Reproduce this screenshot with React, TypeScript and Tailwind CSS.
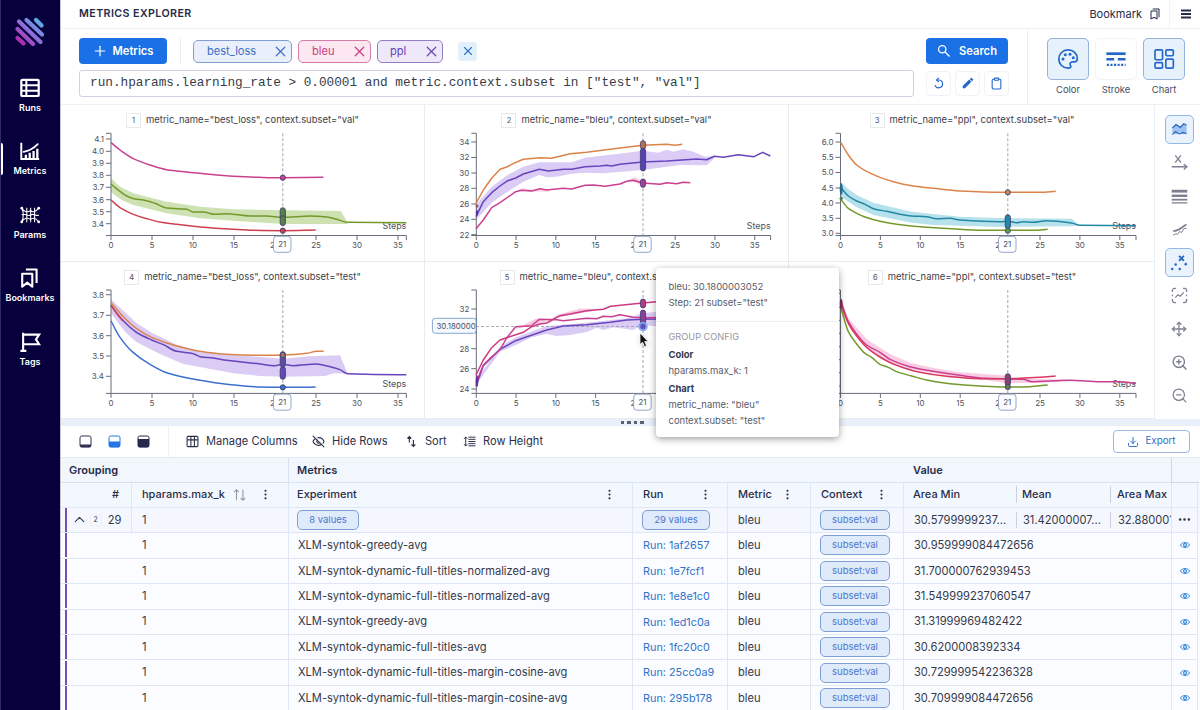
import React from "react";
import {
  ChevronUp, Clipboard, EyeOff, Move, MoreHorizontal, MoreVertical,
  Plus, Search, X, ZoomIn, ZoomOut, Download,
} from "lucide-react";
import { MdEdit, MdOutlineBookmarks } from "react-icons/md";

type Pt = [number, number];
type Line = { color: string; pts: Pt[] };
type Marker = { y0: number; y1: number; fill: string };
type Chart = {
  id: number;
  title: string;
  view: string;
  origin: Pt;
  x0: number;
  step: number;
  end: number;
  top: number;
  bottom: number;
  ticks: [string, number][];
  steps: number[];
  axisName?: string;
  smooth?: boolean;
  guide: number;
  bands: Line[];
  lines: Line[];
  markers: Marker[];
};

const ORANGE = "#dc834a";
const PURPLE = "#6844bd";
const MAGENTA = "#c9408f";
const GREEN = "#73992b";
const RED = "#cf3f4c";
const TEAL = "#2288a6";
const BLUE = "#3d70cc";
const STEPS = [0, 5, 10, 15, 20, 25, 30, 35];

const charts: Chart[] = [
  {
    id: 1, title: 'metric_name="best_loss", context.subset="val"', view: "61 129 363 133", origin: [0, 0],
    x0: 111, step: 8.2, end: 406.3, top: 133.3, bottom: 235.5, guide: 282.8, steps: STEPS, axisName: "Steps", smooth: true,
    ticks: [["4.1", 139], ["4.0", 151.3], ["3.9", 163.3], ["3.8", 175.3], ["3.7", 187.3], ["3.6", 199.7], ["3.5", 211.7], ["3.4", 223.7]],
    bands: [{ color: "#c9deaa", pts: [[333, 535], [360, 560], [400, 580], [500, 605], [600, 620], [700, 628], [848, 631], [1022, 633], [1043, 668], [1043, 672], [848, 672], [700, 662], [600, 655], [500, 640], [400, 615], [365, 600], [333, 577]] }],
    lines: [
      { color: MAGENTA, pts: [[333, 428], [360, 450], [400, 476], [450, 495], [500, 509], [560, 516], [600, 520], [700, 529], [780, 532], [848, 533], [970, 532]] },
      { color: GREEN, pts: [[333, 552], [357, 572], [380, 588], [405, 597], [430, 600], [465, 610], [500, 624], [560, 628], [580, 636], [610, 636], [645, 643], [680, 641], [750, 648], [800, 648], [848, 652], [930, 648], [980, 651], [1010, 658], [1043, 667], [1219, 668]] },
      { color: RED, pts: [[333, 600], [365, 626], [400, 643], [440, 656], [480, 666], [530, 673], [600, 681], [700, 688], [760, 691], [848, 692], [947, 690]] },
    ],
    markers: [{ y0: 533, y1: 533, fill: MAGENTA }, { y0: 631, y1: 652, fill: "#598047" }, { y0: 655, y1: 669, fill: "#598047" }, { y0: 692, y1: 692, fill: RED }],
  },
  {
    id: 2, title: 'metric_name="bleu", context.subset="val"', view: "425 129 363 133", origin: [400, 0],
    x0: 476.3, step: 7.955, end: 770.6, top: 133.3, bottom: 235.5, guide: 643, steps: STEPS, axisName: "Steps",
    ticks: [["34", 142], ["32", 157.5], ["30", 173], ["28", 188.3], ["26", 204], ["24", 219.3], ["22", 234.7]],
    bands: [{ color: "#d6c6f3", pts: [[228, 615], [275, 560], [323, 525], [370, 500], [418, 487], [515, 487], [555, 473], [650, 462], [728, 452], [775, 458], [800, 449], [820, 455], [850, 448], [880, 455], [915, 470], [943, 469], [943, 475], [920, 496], [840, 495], [728, 510], [610, 520], [550, 518], [510, 522], [470, 530], [440, 532], [418, 525], [370, 545], [300, 590], [275, 608], [228, 660]] },
      { color: "#f9c9df", pts: [[680, 543], [705, 531], [728, 545], [728, 556], [700, 546]] }, { color: "#f9d4e5", pts: [[345, 572], [370, 564], [395, 569], [440, 569], [450, 576], [370, 574]] }],
    lines: [
      { color: ORANGE, pts: [[228, 610], [250, 570], [275, 535], [300, 508], [320, 501], [345, 488], [370, 478], [420, 473], [455, 475], [510, 461], [560, 457], [630, 448], [728, 436], [800, 433], [825, 436], [847, 433]] },
      { color: PURPLE, pts: [[228, 650], [250, 605], [275, 578], [300, 558], [323, 542], [347, 534], [370, 522], [418, 508], [445, 513], [490, 508], [515, 508], [555, 500], [600, 498], [620, 496], [635, 498], [660, 493], [728, 486], [800, 483], [890, 477], [920, 479], [943, 469], [970, 472], [1015, 464], [1062, 470], [1088, 457], [1111, 468]] },
      { color: MAGENTA, pts: [[228, 686], [250, 660], [275, 623], [300, 608], [347, 575], [365, 571], [395, 573], [420, 566], [440, 570], [490, 565], [515, 567], [555, 556], [580, 555], [615, 559], [660, 552], [680, 544], [700, 541], [728, 549], [780, 553], [800, 548], [830, 551], [850, 547], [871, 548]] },
    ],
    markers: [{ y0: 430, y1: 440, fill: "#b76c55" }, { y0: 453, y1: 505, fill: "#5940b4" }, { y0: 545, y1: 554, fill: "#a73d92" }],
  },
  {
    id: 3, title: 'metric_name="ppl", context.subset="val"', view: "789 129 366 133", origin: [800, 0],
    x0: 840.5, step: 7.98, end: 1136, top: 133.3, bottom: 235.5, guide: 1007.8, steps: STEPS, axisName: "Steps", smooth: true,
    ticks: [["6.0", 142], ["5.5", 157.3], ["5.0", 172.5], ["4.5", 188], ["4.0", 203], ["3.5", 218.3], ["3.0", 233.3]],
    bands: [{ color: "#afdfea", pts: [[122, 546], [145, 567], [170, 585], [220, 608], [335, 635], [480, 650], [600, 654], [815, 656], [838, 676], [815, 679], [600, 681], [400, 675], [335, 668], [220, 645], [170, 622], [122, 590]] }],
    lines: [
      { color: ORANGE, pts: [[122, 427], [145, 465], [170, 495], [200, 514], [240, 532], [280, 545], [335, 557], [400, 565], [480, 573], [600, 577], [720, 577], [767, 574]] },
      { color: TEAL, pts: [[122, 562], [145, 588], [170, 603], [195, 613], [220, 626], [260, 634], [335, 648], [380, 650], [410, 656], [450, 655], [480, 660], [600, 665], [625, 664], [650, 668], [670, 665], [700, 667], [740, 662], [815, 669], [840, 676], [1008, 677]] },
      { color: GREEN, pts: [[122, 598], [145, 625], [170, 640], [195, 651], [240, 664], [290, 673], [380, 682], [480, 688], [560, 691], [700, 691], [743, 688]] },
    ],
    markers: [{ y0: 577, y1: 577, fill: "#c58462" }, { y0: 652, y1: 678, fill: TEAL }, { y0: 692, y1: 692, fill: "#5f9650" }],
  },
  {
    id: 4, title: 'metric_name="best_loss", context.subset="test"', view: "61 286 363 133", origin: [0, 230],
    x0: 111, step: 8.2, end: 406.3, top: 290, bottom: 393.4, guide: 282.8, steps: STEPS, axisName: "Steps", smooth: true,
    ticks: [["3.8", 294.7], ["3.7", 315.3], ["3.6", 335.7], ["3.5", 356], ["3.4", 376.3]],
    bands: [{ color: "#d6c6f3", pts: [[333, 208], [370, 242], [410, 280], [455, 308], [530, 344], [600, 364], [700, 375], [848, 386], [930, 379], [1020, 376], [1043, 431], [1000, 430], [975, 438], [848, 440], [780, 438], [700, 430], [620, 415], [550, 402], [480, 372], [408, 335], [375, 305], [333, 250]] }],
    lines: [
      { color: PURPLE, pts: [[333, 226], [360, 262], [408, 306], [455, 330], [490, 344], [530, 364], [580, 371], [600, 380], [640, 384], [680, 391], [780, 402], [825, 407], [848, 403], [880, 407], [950, 402], [985, 409], [1020, 419], [1043, 431], [1200, 434], [1219, 434]] },
      { color: RED, pts: [[333, 226], [350, 250], [368, 272]] },
      { color: ORANGE, pts: [[333, 218], [370, 260], [410, 296], [455, 322], [530, 348], [600, 364], [680, 373], [780, 376], [848, 375], [920, 370], [950, 364], [971, 364]] },
      { color: BLUE, pts: [[333, 273], [360, 322], [400, 368], [450, 403], [505, 430], [600, 451], [680, 463], [780, 471], [848, 472], [900, 472], [947, 471]] },
    ],
    markers: [{ y0: 373, y1: 403, fill: "#5c4a9f" }, { y0: 375, y1: 375, fill: "#a2765e" }, { y0: 418, y1: 440, fill: "#6549b8" }, { y0: 472, y1: 472, fill: BLUE }],
  },
  {
    id: 5, title: 'metric_name="bleu", context.subset="test"', view: "425 286 363 133", origin: [400, 250],
    x0: 476.3, step: 7.955, end: 770.6, top: 290, bottom: 393.4, guide: 643, steps: STEPS.slice(0, 5),
    ticks: [["32", 309], ["", 329], ["28", 348.7], ["26", 368.7], ["24", 389]],
    bands: [
      { color: "#d6c6f3", pts: [[228, 390], [300, 290], [347, 262], [440, 228], [560, 218], [680, 205], [728, 190], [800, 182], [900, 182], [900, 232], [800, 232], [728, 225], [700, 240], [640, 232], [610, 240], [590, 233], [560, 246], [510, 255], [470, 258], [440, 252], [395, 262], [347, 285], [300, 305], [228, 405]] },
      { color: "#f6c0dd", pts: [[347, 236], [385, 218], [410, 205], [440, 212], [480, 192], [540, 176], [610, 176], [560, 186], [480, 202], [400, 226]] },
    ],
    lines: [
      { color: PURPLE, pts: [[228, 408], [250, 347], [300, 298], [347, 272], [370, 264], [440, 240], [490, 228], [560, 224], [630, 217], [680, 210], [728, 208], [900, 205]] },
      { color: "#cc3b82", pts: [[228, 375], [250, 330], [275, 293], [300, 270], [320, 263], [347, 254], [370, 247], [395, 230], [420, 222], [440, 219], [480, 197], [510, 192], [560, 182], [610, 178], [632, 169], [728, 159], [770, 155], [900, 148]] },
      { color: MAGENTA, pts: [[228, 400], [250, 345], [275, 320], [300, 299], [320, 264], [347, 230], [395, 227], [418, 208], [470, 209], [490, 212], [560, 205], [590, 206], [610, 199], [635, 200], [660, 194], [700, 202], [728, 203], [900, 202]] },
    ],
    markers: [{ y0: 155, y1: 166, fill: "#b33a83" }, { y0: 188, y1: 216, fill: "#8c4098" }],
  },
  {
    id: 6, title: 'metric_name="ppl", context.subset="test"', view: "789 286 366 133", origin: [800, 250],
    x0: 840.5, step: 7.98, end: 1136, top: 290, bottom: 393.4, guide: 1007.8, steps: STEPS, axisName: "Steps", smooth: true,
    ticks: [["", 293.3], ["", 307.3], ["", 320.3], ["", 333.3], ["", 346.7], ["", 359.7], ["", 372.7], ["", 386]],
    bands: [
      { color: "#f7c6df", pts: [[122, 150], [145, 204], [200, 268], [270, 312], [330, 338], [400, 354], [480, 367], [623, 377], [660, 386], [760, 388], [810, 389], [760, 397], [623, 400], [560, 391], [480, 383], [400, 370], [330, 356], [240, 325], [170, 262], [122, 175]] },
    ],
    lines: [
      { color: GREEN, pts: [[122, 170], [145, 245], [170, 282], [195, 310], [215, 322], [240, 343], [265, 352], [290, 365], [335, 378], [380, 390], [450, 401], [540, 408], [610, 411], [670, 411], [743, 405]] },
      { color: MAGENTA, pts: [[122, 152], [145, 215], [170, 252], [200, 285], [240, 307], [270, 328], [330, 350], [400, 364], [480, 376], [560, 385], [670, 388], [695, 395], [810, 391], [900, 395], [960, 395], [1008, 400]] },
      { color: "#d8365f", pts: [[122, 160], [145, 220], [170, 258], [200, 292], [240, 321], [280, 342], [360, 367], [440, 379], [540, 386], [623, 386], [720, 382], [767, 378]] },
    ],
    markers: [{ y0: 379, y1: 400, fill: "#874070" }, { y0: 411, y1: 411, fill: "#627c55" }],
  },
];

function place(pts: Pt[], [ox, oy]: Pt): Pt[] {
  return pts.map(([x, y]) => [ox + x / 3, oy + y / 3]);
}

function toPath(pts: Pt[], close = false) {
  const d = pts.map(([x, y], i) => `${i ? "L" : "M"}${x.toFixed(1)} ${y.toFixed(1)}`).join("");
  return close ? d + "Z" : d;
}

// Interpolates with monotone tangents so flat stretches never overshoot.
function toCurve(pts: Pt[]) {
  const n = pts.length;
  const slope = (i: number) => (pts[i + 1][1] - pts[i][1]) / (pts[i + 1][0] - pts[i][0]);
  const tangent = (i: number) => {
    if (i === 0) return slope(0);
    if (i === n - 1) return slope(n - 2);
    const a = slope(i - 1);
    const b = slope(i);
    return a * b <= 0 ? 0 : (2 * a * b) / (a + b);
  };
  let d = `M${pts[0][0].toFixed(1)} ${pts[0][1].toFixed(1)}`;
  for (let i = 0; i < n - 1; i++) {
    const [x, y] = pts[i];
    const [u, v] = pts[i + 1];
    const h = (u - x) / 3;
    d += `C${(x + h).toFixed(2)} ${(y + h * tangent(i)).toFixed(2)} ${(u - h).toFixed(2)} ${(v - h * tangent(i + 1)).toFixed(2)} ${u.toFixed(2)} ${v.toFixed(2)}`;
  }
  return d;
}

function ChartPanel({ c }: { c: Chart }) {
  const oy = c.origin[1];
  return (
    <div className={`flex flex-col ${c.id % 3 === 0 ? "w-[366px]" : "w-[364px]"} h-full shrink-0 border-b border-[#e9ebf0] ${c.id % 3 === 0 ? "" : "border-r"}`}>
      <div className="flex h-6 shrink-0 items-center justify-center gap-[5px] pt-[7px] text-[9.45px] text-[#3c414b]">
        <span className="flex h-[15px] w-[15px] items-center justify-center border border-[#e8e9ed] text-[7.5px] text-[#4c515b]">{c.id}</span>
        <span className="whitespace-nowrap">{c.title}</span>
      </div>
      <svg viewBox={c.view} className="h-[133px] w-full shrink-0" fontFamily="Inter, sans-serif" fontSize="8" fill="#4d5360">
        {c.bands.map((b, i) => <path key={i} d={toPath(place(b.pts, c.origin), true)} fill={b.color} fillOpacity=".9" />)}
        <line x1={c.guide} x2={c.guide} y1={c.top} y2={c.bottom} stroke="#989ca8" strokeDasharray="3 2" strokeWidth=".9" />
        {c.id === 5 && <line x1="476" x2="643" y1="326.5" y2="326.5" stroke="#a0a4b0" strokeDasharray="3 2" strokeWidth=".9" />}
        {c.axisName && <text x={c.end} y={c.bottom - 6.8} fontSize="8.9" textAnchor="end">{c.axisName}</text>}
        <g stroke="#686d7b" strokeWidth="1" fill="none">
          <path d={`M${c.x0 - 5} ${c.top}H${c.x0}V${c.bottom}H${c.x0 - 5}M${c.x0} ${c.bottom}H${c.end}V${c.bottom + 4.5}`} />
          {c.ticks.map(([, y]) => <path key={y} d={`M${c.x0 - 5} ${y}H${c.x0}`} />)}
          {c.steps.map((s) => <path key={s} d={`M${c.x0 + s * c.step} ${c.bottom}v4.5`} />)}
        </g>
        {c.ticks.filter(([t]) => t).map(([t, y]) => <text key={y} x={c.x0 - 7} y={y + 2.8} textAnchor="end">{t}</text>)}
        {c.steps.map((s) => <text key={s} x={c.x0 + s * c.step} y={c.bottom + 12.3} textAnchor="middle">{s}</text>)}
        {c.lines.map((l, i) => {
          const pts = place(l.pts, c.origin);
          return <path key={i} d={c.smooth ? toCurve(pts) : toPath(pts)} fill="none" stroke={l.color} strokeWidth="1.5" strokeLinejoin="round" />;
        })}
        {c.markers.map((m, i) => (
          <rect key={i} x={c.guide - 2.6} y={oy + m.y0 / 3 - 2.6} width="5.2" height={(m.y1 - m.y0) / 3 + 5.2} rx="2.6" fill={m.fill} stroke="#414371" strokeWidth=".9" />
        ))}
        {c.id === 2 && <><circle cx="477" cy="206" r="1.5" fill="#8d5a62" /><ellipse cx="477" cy="213" rx="1.1" ry="3" fill="#4631a5" /></>}
        {c.id === 3 && <><ellipse cx="841.2" cy="189" rx="1.5" ry="6" fill="#246b92" /><circle cx="841.2" cy="198.5" r="1.7" fill="#477f51" /></>}
        {c.id === 5 && <><ellipse cx="477" cy="381" rx="1.3" ry="6" fill="#603098" /><circle cx="643" cy="326.5" r="4.8" fill="#82a4ed" fillOpacity=".9" /><circle cx="643" cy="326.5" r="2.7" fill="#624fc3" /></>}
        {c.id === 6 && <ellipse cx="841.2" cy="304" rx="1.4" ry="5" fill="#7d315f" />}
        <rect x={c.guide - 9.3} y={c.bottom + .8} width="17.5" height="16" rx="3" fill="#fbfdff" stroke="#97a7c7" />
        <text x={c.guide - .6} y={c.bottom + 11.8} fontSize="7.8" textAnchor="middle" fill="#474c59">21</text>
        {c.id === 5 && <>
          <rect x="432.4" y="318.3" width="44" height="15" rx="3" fill="#f5f9ff" stroke="#89a5ce" />
          <text x="436.5" y="329.4" fontSize="7.9">30.180000</text>
          <path d="M476.3 318V334" stroke="#6581ab" />
        </>}
      </svg>
    </div>
  );
}

function Svg({ size, box = 24, className = "", children }: { size: number; box?: number; className?: string; children: React.ReactNode }) {
  return <svg width={size} height={size} viewBox={`0 0 ${box} ${box}`} className={`shrink-0 ${className}`} fill="none" stroke="currentColor">{children}</svg>;
}

const navItems = [
  {
    label: "Runs",
    icon: <Svg size={22}><rect x="2.5" y="3.2" width="19" height="17.5" rx="1.2" strokeWidth="2.4" /><path d="M2.5 9H21.5M2.5 15H21.5M8 3V21" strokeWidth="2.2" /></Svg>,
  },
  {
    label: "Metrics",
    icon: <Svg size={22}><path d="M2.5 3V20.8H22" strokeWidth="2.1" /><path d="M5 13C11 12 16 9 20.5 4.5" strokeWidth="1.9" strokeLinecap="round" /><path d="M7.5 20V16M11.7 20V14M15.9 20V12M20 20V9.5" strokeWidth="2.5" /></Svg>,
  },
  {
    label: "Params",
    icon: <Svg size={22}><path d="M8.5 4V20M12.7 4V20M17 4V20M3 4.5C6 9.5 9.5 9.5 12.7 7C15 9.5 18 9 21.5 4.5M3 12C6 9 9 14.5 12.7 12C16 9.5 19 14 21.5 12M3 19.5C6 14.5 9.5 14.5 12.7 17C15 14.5 18 15 21.5 19.5M3 4.5C5 9 5 15 3 19.5" strokeWidth="1.15" /><g fill="currentColor" stroke="none"><circle cx="3" cy="4.5" r="1.5" /><circle cx="21.5" cy="4.5" r="1.5" /><circle cx="3" cy="19.5" r="1.5" /><circle cx="21.5" cy="19.5" r="1.5" /></g></Svg>,
  },
  {
    label: "Bookmarks",
    icon: <Svg size={22}><path d="M3.5 7.3H14.5V21.5L9 17L3.5 21.5Z" strokeWidth="2.3" strokeLinejoin="round" /><path d="M7.5 2.8H19.2V17.5" strokeWidth="2.3" strokeLinejoin="round" /></Svg>,
  },
  {
    label: "Tags",
    icon: <Svg size={22}><path d="M4.5 2V22M1.5 21.7H8M4.5 4H22L18.5 9.2L22 14.5H4.5" strokeWidth="2.3" /></Svg>,
  },
];

function Logo() {
  return (
    <svg width="32" height="32" viewBox="0 0 32 32" fill="none" strokeWidth="4.3" strokeLinecap="round">
      <defs>
        <linearGradient id="aim" x1="4" y1="29" x2="28" y2="4" gradientUnits="userSpaceOnUse">
          <stop stopColor="#b51aa3" /><stop offset=".48" stopColor="#9268d8" /><stop offset="1" stopColor="#55b5e8" />
        </linearGradient>
      </defs>
      <path stroke="url(#aim)" d="M22 4L27.5 9.5M12.5 4L28 18.5M5 5.5L26.5 26M3.5 13L19 28M3.5 22L9.5 27.5" />
    </svg>
  );
}

function Sidebar() {
  return (
    <aside className="flex w-[61px] shrink-0 flex-col items-center border-r border-l border-r-[#c8c7d6] border-l-[#302a62] bg-[#06003c] text-white">
      <div className="flex h-[72px] w-full items-end justify-center pr-[2px] pb-[24px]"><Logo /></div>
      {navItems.map((n) => (
        <div key={n.label} className="flex h-[63.6px] w-full shrink-0 items-stretch justify-center">
          <span className={`mt-[7px] h-8 w-[2px] ${n.label === "Metrics" ? "rounded-r bg-white" : ""}`} />
          <div className="flex flex-1 flex-col items-center pt-[4.5px] pr-[3px]">
            {n.icon}
            <span className="mt-[3px] text-[9px] font-semibold leading-[12px]">{n.label}</span>
          </div>
        </div>
      ))}
    </aside>
  );
}

function Tag({ label, className, pad }: { label: string; className: string; pad: string }) {
  return (
    <div className={`flex h-[23px] items-center justify-between rounded-[5px] border pr-[2px] text-[11.1px] ${pad} ${className}`}>
      <span>{label}</span><X size={17} strokeWidth={1.7} />
    </div>
  );
}

function IconTile({ label, active, children }: { label: string; active?: boolean; children: React.ReactNode }) {
  return (
    <div className="flex w-[42px] flex-col items-center gap-[3px] text-[9.4px] text-[#464d63]">
      <div className={`flex h-[42px] w-[42px] items-center justify-center rounded-[5px] border text-[#2467c9] ${active ? "border-[#93b3db] bg-[#e6f1fc]" : "border-[#f1f3f7] bg-white"}`}>{children}</div>
      <span>{label}</span>
    </div>
  );
}

function QueryBar() {
  return (
    <section className="flex h-[76px] shrink-0 border-b border-[#eef0f4]">
      <div className="flex w-[967px] flex-col border-r border-[#eceff4] pt-[9px] pl-[18px]">
        <div className="flex h-[26px] items-center">
          <button className="flex h-[26px] w-[88px] items-center justify-center gap-[4px] rounded-[4px] bg-[#1a70e5] text-[11.2px] font-semibold text-white"><Plus size={16} strokeWidth={1.8} />Metrics</button>
          <span className="ml-[13px] h-[26px] w-px bg-[#eceff4]" />
          <div className="ml-[12px] flex gap-[6px]">
            <Tag label="best_loss" pad="pl-[13px]" className="w-[99px] border-[#7f9ed2] bg-[#e9f0fc] text-[#3e6fc4]" />
            <Tag label="bleu" pad="pl-[13px]" className="w-[73px] border-[#d27da7] bg-[#fde7f1] text-[#c73e82]" />
            <Tag label="ppl" pad="pl-[12px]" className="w-[66px] border-[#947dc4] bg-[#eee8fb] text-[#6543b3]" />
          </div>
          <button className="ml-[15px] flex h-[19px] w-[19px] items-center justify-center rounded-[4px] bg-[#e2effc] text-[#2c72c7]"><X size={14} strokeWidth={1.9} /></button>
          <button className="ml-[449px] flex h-[26px] w-[82px] items-center justify-center gap-[8px] rounded-[4px] bg-[#1a70e5] text-[11.2px] font-semibold text-white"><Svg size={14}><circle cx="9" cy="9" r="6.3" strokeWidth="2.2" /><path d="M13.8 13.8L21.5 21.5" strokeWidth="2.4" /></Svg>Search</button>
        </div>
        <div className="mt-[6px] flex h-[26px] items-center">
          <div className="flex h-[27px] w-[835px] items-center rounded-[3px] border border-[#cdd3df] pl-[10px] font-['Liberation_Mono','Courier_New',monospace] text-[12.72px] whitespace-pre text-[#363c4b]">run.hparams.learning_rate &gt; 0.00001 and metric.context.subset in ["test", "val"]</div>
          <div className="ml-[12px] flex gap-[4px] text-[#2467c9]">
            {[
              <Svg size={13} key="r"><path d="M9 5.5H13A7.2 7.2 0 1 1 5.5 15" strokeWidth="2.2" /><path d="M12.5 1.5L8.3 5.5L12.5 9.5" strokeWidth="2.1" /></Svg>,
              <MdEdit size={14} key="e" />, <Clipboard size={13} strokeWidth={2} key="c" />,
            ].map((icon, i) => <button key={i} className="flex h-[25px] w-[25px] items-center justify-center rounded-[4px] border border-[#f0f2f7]">{icon}</button>)}
          </div>
        </div>
      </div>
      <div className="flex gap-[6px] pt-[9px] pl-[19px]">
        <IconTile label="Color" active>
          <Svg size={24}><path d="M12 2.8a9.2 9.2 0 1 0 0 18.4c2.8 0 3.3-1.6 2.4-3-.9-1.6 0-3.4 2.1-3.4h1.8c2.1 0 3-1.1 3-3.1C21.3 6.7 17.4 2.8 12 2.8Z" strokeWidth="1.7" /><g fill="currentColor" stroke="none"><circle cx="7" cy="12" r="1.5" /><circle cx="9.3" cy="7.8" r="1.5" /><circle cx="14" cy="7.2" r="1.5" /><circle cx="17.3" cy="10.8" r="1.5" /></g></Svg>
        </IconTile>
        <IconTile label="Stroke"><Svg size={22}><path d="M1.5 6.2H22.5" strokeWidth="3" /><path d="M1.5 12.3H10M14 12.3H22.5" strokeWidth="2.8" /><path d="M2 18.3H22.5" strokeWidth="2.5" strokeDasharray="2.3 1.6" /></Svg></IconTile>
        <IconTile label="Chart" active><Svg size={22}><rect x="2.2" y="2" width="8.2" height="10.8" rx="1.3" strokeWidth="1.8" /><rect x="14" y="2" width="8.2" height="6.4" rx="1.3" strokeWidth="1.8" /><rect x="2.2" y="16" width="8.2" height="6" rx="1.3" strokeWidth="1.8" /><rect x="14" y="12.1" width="8.2" height="9.9" rx="1.3" strokeWidth="1.8" /></Svg></IconTile>
      </div>
    </section>
  );
}

const tools: { active?: boolean; icon: React.ReactNode }[] = [
  { active: true, icon: <Svg size={17}><path d="M2 8L8 5L13 9L18 4L22 7V17L17 19L12 15L7 19L2 16Z" fill="#9dc2f1" stroke="none" /><path d="M2 10L7 5L13 9L18 4L22 6M2 19L6 15L12 18L17 16L22 18" strokeWidth="1.7" /></Svg> },
  { icon: <Svg size={17}><path d="M6 2L14 12M14 2L6 12" strokeWidth="1.7" /><path d="M1 18H22M18 14L22.5 18L18 22" strokeWidth="1.8" /></Svg> },
  { icon: <Svg size={17}><path d="M1 4.5H23" strokeWidth="4" /><path d="M1 11H23" strokeWidth="3.5" /><path d="M1 16.5H23" strokeWidth="2.5" /><path d="M1 21H23" strokeWidth="1.8" /></Svg> },
  { icon: <Svg size={17}><path d="M3 14C11 15 14 9 22 5" strokeWidth="2.3" /><path d="M3 20L7 18L9 19L12 15L15 16L18 11L22 10" strokeWidth="1.4" /></Svg> },
  { active: true, icon: <Svg size={18}><path d="M12 2.5L18.5 9M18.5 2.5L12 9" strokeWidth="2.4" /><g fill="currentColor" stroke="none"><circle cx="3" cy="20" r="1.7" /><circle cx="7.5" cy="14" r="1.7" /><circle cx="13" cy="20" r="1.7" /><circle cx="21" cy="13.5" r="1.7" /></g></Svg> },
  { icon: <Svg size={17}><path d="M2 7V5a3 3 0 0 1 3-3h2M17 2h2a3 3 0 0 1 3 3v2M22 17v2a3 3 0 0 1-3 3h-2M7 22H5a3 3 0 0 1-3-3v-2M2 11V13M22 11V13" strokeWidth="1.8" /><path d="M6 15L10 11L13 13L18 7.5" strokeWidth="1.7" /></Svg> },
  { icon: <Move size={16} strokeWidth={1.9} /> },
  { icon: <ZoomIn size={17} strokeWidth={2} /> },
  { icon: <ZoomOut size={17} strokeWidth={1.7} /> },
];

function Tooltip() {
  return (
    <div className="absolute top-[268px] left-[656px] flex h-[169px] w-[183px] flex-col rounded-[4px] bg-white text-[9.45px] leading-[16px] text-[#575c6c] shadow-[0_2px_7px_rgba(0,0,0,0.38)]">
      <div className="h-[54px] border-b border-[#eceef2] pt-[11px] pl-[12.5px]">
        <p>bleu: 30.1800003052</p><p>Step: 21 subset="test"</p>
      </div>
      <div className="pt-[6.5px] pl-[12.5px]">
        <p className="text-[9.2px] text-[#9396a1]">GROUP CONFIG</p>
        <p className="mt-[2px] font-bold text-[#33384d]">Color</p>
        <p>hparams.max_k: 1</p>
        <p className="mt-[2px] font-bold text-[#33384d]">Chart</p>
        <p>metric_name: "bleu"</p><p>context.subset: "test"</p>
      </div>
    </div>
  );
}

function PanelIcon({ fillY, color }: { fillY: number; color: string }) {
  return (
    <svg width="13" height="13" viewBox="0 0 13 13" className={color}>
      <path d={`M1 ${fillY}H12V11a1.3 1.3 0 0 1-1.3 1.3H2.3A1.3 1.3 0 0 1 1 11Z`} fill="currentColor" />
      <rect x="1" y="1" width="11" height="11" rx="1.8" fill="none" stroke="currentColor" strokeWidth="1" />
    </svg>
  );
}

function Toolbar() {
  return (
    <div className="flex h-[31px] shrink-0 items-center text-[11.1px] text-[#2b3049]">
      <div className="flex w-[108px] items-center gap-[16px] border-r border-[#eff1f5] py-[9px] pl-[18px]">
        <PanelIcon fillY={9.5} color="text-[#303350]" /><PanelIcon fillY={6.5} color="text-[#2477e5]" /><PanelIcon fillY={4} color="text-[#25294d]" />
      </div>
      <div className="flex w-[126px] items-center gap-[7px] pl-[17px]"><Svg size={13}><rect x="2" y="2.5" width="20" height="19" rx="2" strokeWidth="2" /><path d="M2 9H22M9 3V21M15.5 3V21" strokeWidth="2" /></Svg><span className="whitespace-nowrap">Manage Columns</span></div>
      <div className="flex w-[95px] items-center gap-[7px] pl-[17px]"><EyeOff size={13} strokeWidth={2.1} className="shrink-0" /><span className="whitespace-nowrap">Hide Rows</span></div>
      <div className="flex w-[58px] items-center gap-[7px] pl-[15px]"><Svg size={13}><path d="M8 14V3M4.5 6.5L8 3L11.5 6.5M15.5 9V21M12 17.5L15.5 21L19 17.5" strokeWidth="2.1" /></Svg><span>Sort</span></div>
      <div className="flex items-center gap-[7px] pl-[15px]"><Svg size={13}><path d="M5 4V20M2 7L5 3.5L8 7M2 17L5 20.5L8 17" strokeWidth="1.8" /><path d="M10 4H23M10 8H23M10 12H23M10 16H23M10 20H23" strokeWidth="1.8" /></Svg><span className="whitespace-nowrap">Row Height</span></div>
      <button className="mr-[10px] ml-auto flex h-[23px] w-[77px] items-center justify-center gap-[6px] rounded-[4px] border border-[#9db9e2] text-[9.8px] text-[#2d6fc8]"><Download size={12} strokeWidth={2} />Export</button>
    </div>
  );
}

const rows = [
  ["XLM-syntok-greedy-avg", "1af2657", "30.959999084472656"],
  ["XLM-syntok-dynamic-full-titles-normalized-avg", "1e7fcf1", "31.700000762939453"],
  ["XLM-syntok-dynamic-full-titles-normalized-avg", "1e8e1c0", "31.549999237060547"],
  ["XLM-syntok-greedy-avg", "1ed1c0a", "31.31999969482422"],
  ["XLM-syntok-dynamic-full-titles-avg", "1fc20c0", "30.6200008392334"],
  ["XLM-syntok-dynamic-full-titles-margin-cosine-avg", "25cc0a9", "30.729999542236328"],
  ["XLM-syntok-dynamic-full-titles-margin-cosine-avg", "295b178", "30.709999084472656"],
];

const GRID = "grid grid-cols-[71px_157px_344px_95px_83px_93px_268px_26px] pr-[2px]";
const CELL = "flex items-center border-r border-b border-[#dde7f5] whitespace-nowrap overflow-hidden";

function Pill({ children, w }: { children: React.ReactNode; w: string }) {
  return <span className={`flex h-[20px] items-center justify-center rounded-[5px] border border-[#7f9fd4] bg-[#dfeafb] text-[9.5px] text-[#4a78cb] ${w}`}>{children}</span>;
}

function Table() {
  return (
    <div className="flex flex-1 flex-col overflow-hidden border-t border-[#e4e9f2] bg-[#fbfcff] text-[11.12px] text-[#343949]">
      <div className="grid h-[24.5px] shrink-0 grid-cols-[228px_615px_267px_28px] bg-[#f2f6fd] text-[11px] font-semibold text-[#262b49]">
        <div className="flex items-center border-r-[1.5px] border-b border-[#d4dff0] pl-[8px]">Grouping</div>
        <div className="flex items-center border-b border-[#d8e5f7] pl-[8px]">Metrics</div>
        <div className="flex items-center border-b border-[#d8e5f7] pl-[9px]">Value</div>
        <div className="border-b border-l border-[#ccd9ed]" />
      </div>
      <div className={`${GRID} h-[25.2px] shrink-0 bg-[#f3f7fe] text-[11px] font-medium text-[#292e49]`}>
        <div className={`${CELL} justify-end pr-[12px]`}>#</div>
        <div className={`${CELL} pl-[10px]`}>hparams.max_k<Svg size={14} className="ml-[8px] text-[#91959f]"><path d="M6 21V3M2 7L6 3L10 7M17 3V21M13 17L17 21L21 17" strokeWidth="1.8" /></Svg><MoreVertical size={13} className="mr-[16px] ml-auto" /></div>
        <div className={`${CELL} pl-[8px]`}>Experiment<MoreVertical size={13} className="mr-[16px] ml-auto" /></div>
        <div className={`${CELL} pl-[10px]`}>Run<MoreVertical size={13} className="mr-[15px] ml-auto" /></div>
        <div className={`${CELL} pl-[10px]`}>Metric<MoreVertical size={13} className="mr-[16px] ml-auto" /></div>
        <div className={`${CELL} pl-[10px]`}>Context<MoreVertical size={13} className="mr-[15px] ml-auto" /></div>
        <div className={`${CELL} pl-[9px]`}><span className="w-[104px] border-r border-[#ccd2dd]">Area Min</span><span className="w-[94px] border-r border-[#ccd2dd] pl-[5px]">Mean</span><span className="pl-[6px]">Area Max</span></div>
        <div className={CELL} />
      </div>
      <div className={`${GRID} h-[25.5px] shrink-0 bg-[#f4f8fe]`}>
        <div className={`${CELL} pl-[3.5px]`}><span className="h-[24px] w-[2.7px] shrink-0 bg-[#7650ae]" /><ChevronUp size={17} strokeWidth={1.6} className="ml-[3.5px] shrink-0" /><span className="ml-[2px] flex h-[12px] w-[12px] items-center justify-center border border-[#edf0f6] text-[7px]">2</span><span className="ml-[6px]">29</span></div>
        <div className={`${CELL} pl-[10px]`}>1</div>
        <div className={`${CELL} pl-[8px]`}><Pill w="w-[62px]">8 values</Pill></div>
        <div className={`${CELL} pl-[9px]`}><Pill w="w-[68px]">29 values</Pill></div>
        <div className={`${CELL} pl-[10px]`}>bleu</div>
        <div className={`${CELL} pl-[9px]`}><Pill w="w-[70px]">subset:val</Pill></div>
        <div className={`${CELL} pl-[10px]`}><span className="w-[103px] shrink-0 border-r border-[#ccd2dd]">30.5799999237...</span><span className="w-[94px] shrink-0 border-r border-[#ccd2dd] pl-[6px]">31.42000007...</span><span className="pl-[7px]">32.880001</span></div>
        <div className={`${CELL} justify-center`}><MoreHorizontal size={15} strokeWidth={2.2} /></div>
      </div>
      {rows.map(([name, run, value]) => (
        <div key={run} className={`${GRID} h-[25.45px] shrink-0`}>
          <div className="flex items-center border-b border-[#e0e9f6] pl-[3.5px]"><span className="h-[24px] w-[2.7px] bg-[#7650ae]" /></div>
          <div className={`${CELL} pl-[10px]`}>1</div>
          <div className={`${CELL} pl-[9px]`}>{name}</div>
          <div className={`${CELL} pl-[10px] text-[10.85px] text-[#2f72c9]`}>Run: {run}</div>
          <div className={`${CELL} pl-[10px]`}>bleu</div>
          <div className={`${CELL} pl-[9px]`}><Pill w="w-[70px]">subset:val</Pill></div>
          <div className={`${CELL} pl-[10px]`}>{value}</div>
          <div className={`${CELL} justify-center text-[#3387df]`}><Svg size={10}><path d="M1 12C5 4 19 4 23 12C19 20 5 20 1 12Z" strokeWidth="2.3" /><circle cx="12" cy="12" r="4" strokeWidth="2.2" /><circle cx="12" cy="12" r="1.2" fill="currentColor" /></Svg></div>
        </div>
      ))}
    </div>
  );
}

export default function App() {
  return (
    <div className="relative flex h-[710px] w-[1200px] overflow-hidden bg-white font-['Inter',sans-serif]">
      <Sidebar />
      <main className="flex min-w-0 flex-1 flex-col">
        <header className="flex h-[29px] shrink-0 items-center border-b border-[#f0f1f4] pl-[18px] text-[#252b48]">
          <h1 className="text-[10.7px] font-semibold tracking-[0.4px]">METRICS EXPLORER</h1>
          <div className="ml-auto flex h-full items-center gap-[7px] border-r border-[#f0f1f4] pr-[8px] text-[11px]">Bookmark<MdOutlineBookmarks size={12} /></div>
          <Svg size={12} className="mr-[8px] ml-[10px]"><path d="M2 5H22M2 12H22M2 19H22" strokeWidth="3.8" /></Svg>
        </header>
        <QueryBar />
        <section className="flex h-[314px] shrink-0">
          <div className="flex w-[1094px] shrink-0 flex-col border-r border-[#eceff4]">
            <div className="flex h-[157px] shrink-0">{charts.slice(0, 3).map((c) => <ChartPanel key={c.id} c={c} />)}</div>
            <div className="flex h-[157px] shrink-0">{charts.slice(3).map((c) => <ChartPanel key={c.id} c={c} />)}</div>
          </div>
          <div className="flex flex-1 flex-col items-center gap-[4.3px] pt-[10px] pl-[3px]">
            {tools.map((t, i) => <button key={i} className={`flex h-[29px] w-[29px] items-center justify-center rounded-[5px] ${t.active ? "border border-[#93b8e4] bg-[#e9f3fd] text-[#2a66bd]" : "text-[#7d8090]"}`}>{t.icon}</button>)}
          </div>
        </section>
        <div className="flex h-[7px] shrink-0 items-center justify-center gap-[3px] bg-[#e9f0fa] pl-[3px]">
          {[0, 1, 2, 3].map((i) => <span key={i} className="h-[3px] w-[3.5px] bg-[#5c6075]" />)}
        </div>
        <Toolbar />
        <Table />
      </main>
      <Tooltip />
      <svg className="absolute top-[332px] left-[639px] drop-shadow-sm" width="10" height="16" viewBox="0 0 10 16"><path d="M1 1V12.5L3.6 10.2L5.5 14.7L7.5 13.8L5.7 9.6H9.2Z" fill="#111" stroke="#fff" strokeWidth=".8" /></svg>
    </div>
  );
}
